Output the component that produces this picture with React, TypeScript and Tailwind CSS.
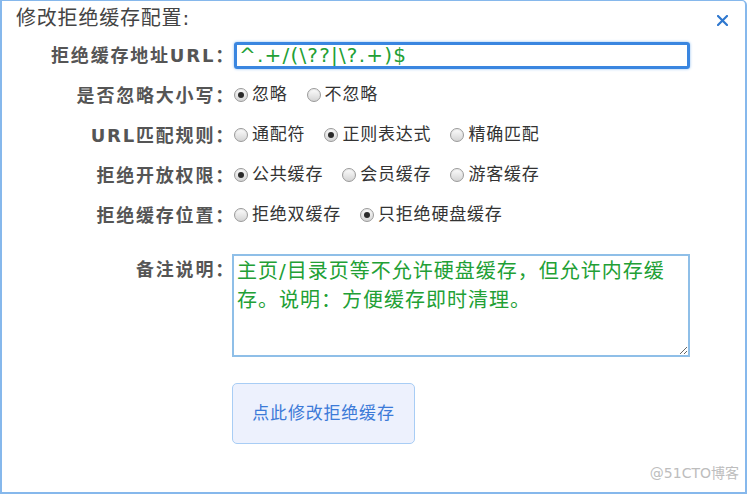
import React, { useState } from 'react';

const font = { fontFamily: '"DejaVu Sans", "Noto Sans CJK SC", sans-serif' };

interface RadioProps {
  label: string;
  checked: boolean;
  onSelect: () => void;
}

const Radio: React.FC<RadioProps> = ({ label, checked, onSelect }) => (
  <label onClick={onSelect} className="flex items-center mr-[19px] cursor-pointer">
    <span className="w-[14px] h-[14px] rounded-full border border-[#9a9a9a] bg-gradient-to-b from-[#fdfdfd] to-[#d4d4d4] flex items-center justify-center shadow-[inset_0_1px_1px_rgba(0,0,0,0.08)]">
      {checked && <span className="w-[6px] h-[6px] rounded-full bg-[#2b2b2b]" />}
    </span>
    <span className="ml-[4px] text-[17px] tracking-[0.8px] text-[#333]">{label}</span>
  </label>
);

const Label: React.FC<{ text: string; className?: string }> = ({ text, className = '' }) => (
  <div className={`w-[230px] text-right text-[18px] font-bold tracking-[1.8px] text-[#555] ${className}`}>
    <span className="mr-[-3px]">{text}</span>
  </div>
);

const Row: React.FC<{ label: string; children: React.ReactNode }> = ({ label, children }) => (
  <div className="flex items-center h-[40px]">
    <Label text={label} />
    <div className="flex items-center pl-[2px]">{children}</div>
  </div>
);

export default function App() {
  const [ignoreCase, setIgnoreCase] = useState(0);
  const [rule, setRule] = useState(1);
  const [perm, setPerm] = useState(0);
  const [pos, setPos] = useState(1);
  const [url, setUrl] = useState('^.+/(\\??|\\?.+)$');
  const [note, setNote] = useState('主页/目录页等不允许硬盘缓存，但允许内存缓存。说明：方便缓存即时清理。');

  return (
    <div className="w-[751px] h-[496px] bg-white" style={font}>
      <div className="relative w-[747px] h-[494px] border-2 border-t border-[#86b8ec] rounded-tr-[5px] bg-white">
        <div className="flex items-center justify-between h-[34px] pl-[14px] pr-[17px]">
          <span className="text-[20px] tracking-[0.8px] text-[#444]">修改拒绝缓存配置:</span>
          <svg width="11" height="11" viewBox="0 0 11 11" className="mt-[4px]">
            <path d="M1 1 L10 10 M10 1 L1 10" stroke="#2f78cf" strokeWidth="2.2" strokeLinecap="round" />
          </svg>
        </div>

        <div className="flex flex-col">
          <Row label="拒绝缓存地址URL：">
            <input
              value={url}
              onChange={(e) => setUrl(e.target.value)}
              className="w-[456px] h-[27px] border-[3px] border-[#3a86e0] rounded-[3px] px-[2px] text-[20px] tracking-[1.2px] text-[#22a035] outline-none shadow-[0_0_3px_#8fbef0]"
              style={font}
            />
          </Row>
          <Row label="是否忽略大小写：">
            {['忽略', '不忽略'].map((t, i) => (
              <Radio key={t} label={t} checked={ignoreCase === i} onSelect={() => setIgnoreCase(i)} />
            ))}
          </Row>
          <Row label="URL匹配规则：">
            {['通配符', '正则表达式', '精确匹配'].map((t, i) => (
              <Radio key={t} label={t} checked={rule === i} onSelect={() => setRule(i)} />
            ))}
          </Row>
          <Row label="拒绝开放权限：">
            {['公共缓存', '会员缓存', '游客缓存'].map((t, i) => (
              <Radio key={t} label={t} checked={perm === i} onSelect={() => setPerm(i)} />
            ))}
          </Row>
          <Row label="拒绝缓存位置：">
            {['拒绝双缓存', '只拒绝硬盘缓存'].map((t, i) => (
              <Radio key={t} label={t} checked={pos === i} onSelect={() => setPos(i)} />
            ))}
          </Row>

          <div className="flex items-start mt-[19px]">
            <Label text="备注说明：" className="pt-[2px]" />
            <textarea
              value={note}
              onChange={(e) => setNote(e.target.value)}
              className="w-[458px] h-[103px] border-2 border-[#8fbfe8] pl-[3px] pr-[10px] pt-[1px] text-[20px] leading-[29px] tracking-[1px] text-[#22a035] outline-none"
              style={font}
            />
          </div>

          <div className="flex mt-[26px] pl-[230px]">
            <button className="w-[183px] h-[61px] bg-[#edf1fd] border border-[#a8cdf5] rounded-[5px] text-[17px] tracking-[0.8px] text-[#3c7ad8]">
              点此修改拒绝缓存
            </button>
          </div>
        </div>

        <span className="absolute right-[6px] bottom-[8px] text-[14px] text-[#bdbdbd]">@51CTO博客</span>
      </div>
    </div>
  );
}
